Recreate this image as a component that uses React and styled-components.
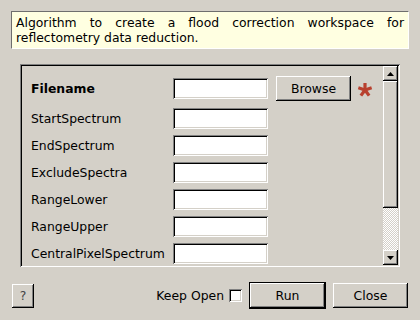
import React from "react";
import styled, { createGlobalStyle, css } from "styled-components";

const GlobalStyle = createGlobalStyle`
	html, body {
		margin: 0;
		padding: 0;
		background: #d4d0c8;
	}
	body {
		font-family: "DejaVu Sans", "Liberation Sans", sans-serif;
		font-size: 12.4px;
		color: #000;
	}
`;

const raised = css`
	background: #d4d0c8;
	box-shadow: inset -1px -1px #000, inset 1px 1px #fff, inset -2px -2px #808080;
`;

const sunken = css`
	box-shadow: inset 1px 1px #808080, inset -1px -1px #fff, inset 2px 2px #000,
		inset -2px -2px #d4d0c8;
`;

const Dialog = styled.div`
	width: 420px;
	height: 320px;
	box-sizing: border-box;
	padding: 11px;
	display: flex;
	flex-direction: column;
	background: #d4d0c8;
`;

const Description = styled.div`
	height: 38px;
	box-sizing: border-box;
	padding: 3px 4px 3px 4px;
	background: #ffffe1;
	border-top: 1px solid #6e6e6e;
	border-left: 1px solid #6e6e6e;
	border-right: 1px solid #fff;
	border-bottom: 1px solid #fff;
	line-height: 15px;
	text-align: justify;
`;

const Frame = styled.div`
	margin: 15px 9px 0;
	height: 203px;
	box-sizing: border-box;
	padding: 2px;
	display: flex;
	${sunken};
`;

const Fields = styled.div`
	flex: 1;
	overflow: hidden;
	padding: 6px 0 0 9px;
	display: flex;
	flex-direction: column;
`;

const Row = styled.div`
	height: ${(p) => p.$height}px;
	flex-shrink: 0;
	display: flex;
	align-items: center;
`;

const Label = styled.span`
	width: 142px;
	flex-shrink: 0;
	white-space: nowrap;
	font-weight: ${(p) => (p.$bold ? "bold" : "normal")};
`;

const Input = styled.div`
	width: 95px;
	height: 21px;
	box-sizing: border-box;
	background: #fff;
	${sunken};
`;

const Button = styled.button`
	font: inherit;
	color: #000;
	width: ${(p) => p.$width}px;
	height: 25px;
	padding: 0;
	border: none;
	box-sizing: border-box;
	${raised};
	${(p) =>
		p.$default &&
		css`
			height: 27px;
			width: ${p.$width + 2}px;
			box-shadow: inset 0 0 0 1px #000, inset -2px -2px #000, inset 2px 2px #fff,
				inset -3px -3px #808080;
		`}
`;

const BrowseButton = styled(Button)`
	margin-left: 8px;
`;

const Required = styled.svg`
	margin-left: 6px;
	margin-top: 2px;
`;

const ScrollBar = styled.div`
	width: 15px;
	display: flex;
	flex-direction: column;
`;

const ArrowButton = styled.div`
	height: 15px;
	flex-shrink: 0;
	display: flex;
	align-items: center;
	justify-content: center;
	${raised};
`;

const Thumb = styled.div`
	height: ${(p) => p.$size}px;
	flex-shrink: 0;
	${raised};
`;

const Trough = styled.div`
	flex: 1;
	background-color: #d4d0c8;
	background-image: conic-gradient(#fff 25%, #d4d0c8 0 50%, #fff 0 75%, #d4d0c8 0);
	background-size: 2px 2px;
`;

const Footer = styled.div`
	margin-top: 15px;
	height: 27px;
	padding: 0 1px;
	display: flex;
	align-items: center;
`;

const HelpButton = styled(Button)`
	height: 24px;
	color: #444;
`;

const Spacer = styled.div`
	flex: 1;
`;

const KeepOpen = styled.label`
	display: flex;
	align-items: center;
	gap: 5px;
	margin-right: 7px;
`;

const CheckBox = styled.span`
	width: 13px;
	height: 13px;
	box-sizing: border-box;
	background: #fff;
	${sunken};
`;

const CloseButton = styled(Button)`
	margin-left: 7px;
`;

const Arrow = ({ down }) => (
	<svg width="7" height="4" viewBox="0 0 7 4">
		<polygon points={down ? "0,0 7,0 3.5,4" : "0,4 7,4 3.5,0"} fill="#000" />
	</svg>
);

const Asterisk = () => {
	const arms = [-90, -18, 54, 126, 198].map((a) => {
		const r = (a * Math.PI) / 180;
		return [8 + 7 * Math.cos(r), 8 + 7 * Math.sin(r)];
	});
	return (
		<Required width="16" height="16" viewBox="0 0 16 16">
			{arms.map(([x, y], i) => (
				<line key={i} x1="8" y1="8" x2={x} y2={y} stroke="#b8402e" strokeWidth="3.2" />
			))}
		</Required>
	);
};

const fields = [
	"StartSpectrum",
	"EndSpectrum",
	"ExcludeSpectra",
	"RangeLower",
	"RangeUpper",
	"CentralPixelSpectrum"
];

const App = () => (
	<>
		<GlobalStyle />
		<Dialog>
			<Description>
				Algorithm to create a flood correction workspace for reflectometry data reduction.
			</Description>
			<Frame>
				<Fields>
					<Row $height={33}>
						<Label $bold>Filename</Label>
						<Input />
						<BrowseButton $width={75}>Browse</BrowseButton>
						<Asterisk />
					</Row>
					{fields.map((name) => (
						<Row key={name} $height={27}>
							<Label>{name}</Label>
							<Input />
						</Row>
					))}
				</Fields>
				<ScrollBar>
					<ArrowButton>
						<Arrow />
					</ArrowButton>
					<Thumb $size={127} />
					<Trough />
					<ArrowButton>
						<Arrow down />
					</ArrowButton>
				</ScrollBar>
			</Frame>
			<Footer>
				<HelpButton $width={22}>?</HelpButton>
				<Spacer />
				<KeepOpen>
					Keep Open
					<CheckBox />
				</KeepOpen>
				<Button $width={75} $default>
					Run
				</Button>
				<CloseButton $width={75}>Close</CloseButton>
			</Footer>
		</Dialog>
	</>
);

export default App;
